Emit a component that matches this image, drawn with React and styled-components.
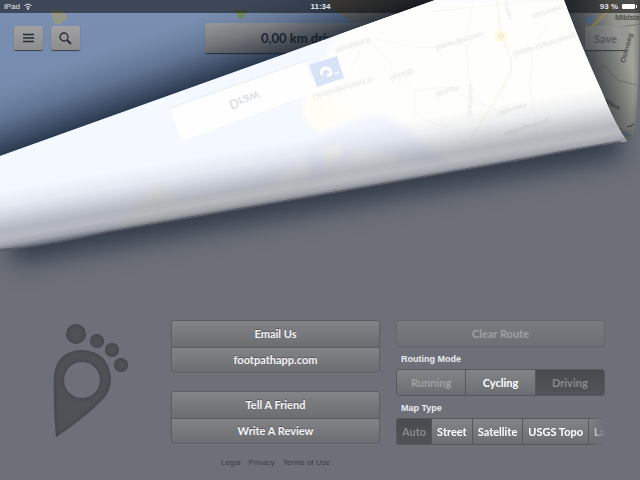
import React from 'react';
import styled, { createGlobalStyle } from 'styled-components';

const GlobalStyle = createGlobalStyle`
  * {
    box-sizing: border-box;
  }

  body {
    margin: 0;
    background: #6d7079;
    font-family: Lato, 'Liberation Sans', sans-serif;
  }

  button {
    font-family: inherit;
    cursor: pointer;
  }
`;

const Page = styled.div`
  position: relative;
  display: flex;
  flex-direction: column;
  min-height: 100vh;
  overflow: hidden;
`;

const Scene = styled.svg`
  position: absolute;
  z-index: ${p => p.$level || 0};
  top: 0;
  left: 0;
  display: block;
  width: 100%;
  pointer-events: none;
`;

const StatusBar = styled.header`
  position: relative;
  z-index: 2;
  display: grid;
  grid-template-columns: 1fr auto 1fr;
  align-items: center;
  height: 13px;
  padding: 0 3px 0 4px;
  background: rgba(0, 0, 0, 0.5);
  color: #e8eaee;
  font: 8px/13px 'Liberation Sans', sans-serif;
`;

const StatusItem = styled.span`
  display: flex;
  align-items: center;
  justify-content: ${p => (p.$end ? 'flex-end' : 'flex-start')};
  gap: 4px;
  font-weight: ${p => (p.$bold ? 700 : 400)};
`;

const Toolbar = styled.nav`
  position: relative;
  display: grid;
  grid-template-columns: 1fr 230px 1fr;
  align-items: center;
  padding: 10px 14px 0;
`;

const ToolGroup = styled.div`
  display: flex;
  gap: 8px;
  justify-content: ${p => (p.$end ? 'flex-end' : 'flex-start')};
`;

const ToolButton = styled.button`
  display: flex;
  align-items: center;
  justify-content: center;
  width: ${p => (p.$wide ? 41 : 29)}px;
  height: 24px;
  padding: 0;
  border: 0;
  border-radius: 2px;
  background: ${p => (p.disabled ? 'rgba(150, 150, 150, 0.8)' : 'linear-gradient(#a1a1a1, #8d8d8d)')};
  box-shadow: 0 1px 1px #3b4047;
  color: ${p => (p.disabled ? '#666' : '#262d36')};
  font-size: 11px;
  font-weight: 700;
`;

const Distance = styled.output`
  height: 30px;
  padding-left: 56px;
  border-radius: 2px;
  background: linear-gradient(#9c9c9c, #888);
  box-shadow: 0 1px 1px #30353d;
  color: #262d36;
  font-size: 13px;
  font-weight: 700;
  line-height: 30px;
`;

const Settings = styled.main`
  position: relative;
  z-index: 4;
  display: grid;
  grid-template-columns: 102px 1fr 1fr;
  gap: 16px;
  margin-top: auto;
  padding: 240px 35px 11px 53px;
`;

const Column = styled.section`
  display: flex;
  flex-direction: column;
  min-width: 0;
`;

const ButtonStack = styled.div`
  display: flex;
  flex-direction: column;
  margin-bottom: 18px;
  border: 1px solid #5b5d63;
  border-radius: 3px;
  box-shadow: 0 1px 0 #787b83;
  overflow: hidden;
`;

const PanelButton = styled.button`
  height: 26px;
  padding: 0 0 1px;
  border: 0;
  background: linear-gradient(#838488, #6c6d70);
  color: #f4f4f5;
  font-size: 11px;
  font-weight: 700;
  text-shadow: 0 -1px 0 #55565a;

  & + & {
    border-top: 1px solid #58595d;
  }

  &:last-child {
    height: 25px;
  }
`;

const ClearButton = styled(PanelButton)`
  && {
    height: 27px;
    border: 1px solid #64666c;
    border-radius: 3px;
    background: linear-gradient(#7a7b80, #6d6f74);
    color: #a0a1a5;
    text-shadow: none;
  }
`;

const Label = styled.h2`
  margin: 0;
  padding: 7px 0 4px 5px;
  color: #ebecee;
  font: 700 9px/11px 'Liberation Sans', sans-serif;
`;

const Segments = styled.div`
  display: flex;
  height: 27px;
  border: 1px solid #55575c;
  border-right-width: ${p => (p.$scrolls ? 0 : 1)}px;
  border-radius: 3px;
  overflow: hidden;
  ${p => p.$scrolls && 'mask-image: linear-gradient(90deg, #000 92%, transparent);'}
`;

const Segment = styled.button`
  flex: ${p => (p.$fit ? '0 0 auto' : '1 1 0')};
  padding: 0 ${p => (p.$fit ? 5 : 0)}px 1px;
  border: 0;
  background: ${p => (p['aria-pressed'] ? 'linear-gradient(#4a4b4e, #525356)' : 'linear-gradient(#838488, #6c6d70)')};
  color: ${p => (p['aria-pressed'] ? '#898a8e' : p.disabled ? '#a0a1a5' : '#fff')};
  font-size: 11px;
  font-weight: 700;
  white-space: nowrap;

  & + & {
    border-left: 1px solid #55575c;
  }
`;

const Legal = styled.footer`
  display: flex;
  justify-content: center;
  gap: 8px;
  margin-top: -5px;
  font: 8px/12px 'Liberation Sans', sans-serif;

  a {
    color: #3c3f47;
    text-decoration: none;
  }
`;

const Footprint = styled.svg`
  width: 78px;
  height: 120px;
`;

// labels seen through the back of the page, so they are upside down
const ghostLabels = [
  ['Norddeich', 335, 48, 8],
  ['Neuenkirchen', 435, 46, 8],
  ['Süder-Marienkoog', 512, 52, 8],
  ['Wöhrden', 531, 14, 8],
  ['Schülp', 389, 76, 8],
  ['Oesterdeichstrich', 312, 95, 8],
  ['Büsum', 435, 92, 8],
  ['Hillgroven', 496, 112, 7],
  ['Hedwigenkoog', 504, 132, 7],
];

const roads = [
  'M366 37 L391 64 L393 77 L416 90 L414 115 L450 130',
  'M366 37 L346 82 L320 108',
  'M366 37 L420 48 L475 43',
  'M474 0 L466 40 L470 95 L466 120',
  'M550 20 L533 48 L530 85 L538 140',
  'M416 90 L448 87 L475 101 L505 113',
  'M440 120 L476 155',
  'M430 12 L500 4 L562 0',
];

const BackMap = () => (
  <Scene viewBox="0 0 640 480" aria-hidden="true">
    <defs>
      <linearGradient id="water" x1="0" y1="0" x2="0" y2="1">
        <stop offset="0" stopColor="#7a8fb1" />
        <stop offset="1" stopColor="#7288aa" />
      </linearGradient>
      <linearGradient id="flap" x1="570" y1="0" x2="640" y2="0" gradientUnits="userSpaceOnUse">
        <stop offset="0" stopColor="#62676b" />
        <stop offset="0.6" stopColor="#8e908b" />
        <stop offset="0.9" stopColor="#a1a299" />
        <stop offset="1" stopColor="#7f8078" />
      </linearGradient>
      <clipPath id="flapClip">
        <path d="M560 0 H640 L639 50 Q638 112 634 130 Q631 141 625 141 Q605 112 560 0Z" />
      </clipPath>
    </defs>
    <path d="M0 0 H440 L0 158Z" fill="url(#water)" />
    <path d="M50 10 L62 10 L68 17 L60 25 L54 23Z" fill="#949887" />
    <path d="M233 10 H249 L241 20Z" fill="#748f61" />
    <path d="M325 0 L334 10 L355 23 L390 20 L440 0Z" fill="#8b857b" />
    <g clipPath="url(#flapClip)">
      <rect x="560" width="80" height="145" fill="url(#flap)" />
      <path d="M584 20 l10 -6 -2 8 4 3 -9 -2z" fill="#607ca5" />
      <path d="M588 30 L607 12 L614 0" fill="none" stroke="#a89659" strokeWidth="2" />
      <path d="M566 15 L600 30 L640 24 M600 28 L590 78 M584 70 L605 66 L618 80 L640 86 M570 26 L584 4" fill="none" stroke="#727a77" />
      <path d="M616 134 L640 136" stroke="#8095ab" strokeWidth="2" />
      <g fill="#33342f" fontFamily="Liberation Sans, sans-serif">
        <text x="615" y="20" fontSize="8">Mildste</text>
        <text transform="translate(625 63) rotate(-75)" fontSize="7">Osterweg</text>
        <text transform="translate(601 100) rotate(30)" fontSize="6">addieck</text>
      </g>
      <path d="M617 131 l5 -2 M627 127 l4 -1 3 -2" fill="none" stroke="#44453f" />
    </g>
  </Scene>
);

const PageShade = () => (
  <Scene $level={1} viewBox="0 0 640 480" aria-hidden="true">
    <defs>
      <linearGradient id="edgeShade" x1="217" y1="78" x2="195" y2="17" gradientUnits="userSpaceOnUse">
        <stop offset="0" stopColor="#0a1424" stopOpacity="0.68" />
        <stop offset="0.2" stopColor="#0a1424" stopOpacity="0.48" />
        <stop offset="0.5" stopColor="#0a1424" stopOpacity="0.2" />
        <stop offset="0.8" stopColor="#0a1424" stopOpacity="0.05" />
        <stop offset="1" stopColor="#0a1424" stopOpacity="0" />
      </linearGradient>
      <filter id="blur" x="-20%" y="-50%" width="140%" height="200%" colorInterpolationFilters="sRGB">
        <feGaussianBlur stdDeviation="13" />
      </filter>
      <clipPath id="below">
        <path d="M0 240 L630 130 L640 80 V480 H0Z" />
      </clipPath>
    </defs>
    <path d="M0 156 L435 0 H180 L0 65Z" fill="url(#edgeShade)" />
    <g clipPath="url(#below)">
      <path d="M10 244 L320 190 L620 138" fill="none" stroke="#303a48" strokeWidth="40" filter="url(#blur)" />
    </g>
  </Scene>
);

const PageCurl = () => (
  <Scene $level={3} viewBox="0 0 640 480" aria-hidden="true">
    <defs>
      <linearGradient id="flapShade" x1="592" y1="70" x2="627" y2="57" gradientUnits="userSpaceOnUse">
        <stop offset="0" stopColor="#15191f" stopOpacity="0.5" />
        <stop offset="1" stopColor="#15191f" stopOpacity="0" />
      </linearGradient>
      <linearGradient id="roll" x1="320" y1="195" x2="310" y2="137" gradientUnits="userSpaceOnUse">
        <stop offset="0" stopColor="#5a5e69" stopOpacity="0.85" />
        <stop offset="0.08" stopColor="#70737f" stopOpacity="0.62" />
        <stop offset="0.18" stopColor="#7c7e89" stopOpacity="0.52" />
        <stop offset="0.32" stopColor="#6f7382" stopOpacity="0.5" />
        <stop offset="0.48" stopColor="#737886" stopOpacity="0.36" />
        <stop offset="0.72" stopColor="#8288a0" stopOpacity="0.14" />
        <stop offset="1" stopColor="#8a90a0" stopOpacity="0" />
      </linearGradient>
      <filter id="haze" colorInterpolationFilters="sRGB">
        <feGaussianBlur stdDeviation="3" />
      </filter>
      <clipPath id="page">
        <path d="M0 156 L435 0 H564 Q578 39 602 92 Q616 127 627 141 Q580 148 530 158 L320 195 L107 232 Q40 247 0 250Z" />
      </clipPath>
    </defs>
    <path d="M564 0 H640 L639 50 Q638 112 634 130 Q631 141 625 141 Q605 112 564 0Z" fill="url(#flapShade)" />
    <g clipPath="url(#page)">
      <rect width="640" height="260" fill="#f4f8ff" />
      <path d="M250 0 H640 V200 H250 L290 170 L322 150 L350 130 L318 128 L303 108 L306 90 L340 30Z" fill="#fefefc" filter="url(#haze)" />
      <g filter="url(#haze)">
        <path d="M302 108 Q305 128 322 131 L360 112 L312 92Z" fill="#fffef6" />
        <path d="M305 150 L345 125 L370 116 L392 118 L415 136 L450 164 L405 160 L360 149 L345 162 L310 185Z" fill="#f0f4fd" />
        <path d="M322 148 L344 146 L340 158 L326 170Z" fill="#fbfaf4" />
        <path d="M120 225 L158 185 L175 202 L260 190 L300 183 L320 192 L110 235Z" fill="#f9f8f1" />
      </g>
      <g fill="none" stroke="#f8f8f6">
        {roads.map(d => (
          <path key={d} d={d} />
        ))}
        <path d="M497 0 L501 36 L511 58 L511 72 L497 97 L470 140" stroke="#faf7ee" strokeWidth="2" />
      </g>
      <circle cx="501" cy="36" r="6" fill="#fef9e3" />
      <circle cx="501" cy="36" r="2" fill="none" stroke="#e8e0bf" />
      <path d="M170 108 L305 61 L317 92 L182 141Z" fill="#fefefe" />
      <path d="M170 108 L305 61" stroke="#e8ebf0" />
      <path d="M309 65 L337 56 L344 78 L317 87Z" fill="#d8e3f8" />
      <path d="M322 75 Q320 70 325 68 Q331 68 331 73 Q330 76 327 75" fill="none" stroke="#fff" strokeWidth="3" />
      <path d="M334 74 l5 -2" stroke="#f1f5fd" strokeWidth="2" />
      <text transform="translate(228 101) rotate(-19) scale(1 -1)" fontFamily="Lato, sans-serif" fontSize="13" fontWeight="700" fill="#dfe1e5">
        Draw
      </text>
      <g fill="#e8e8e5" fontFamily="Liberation Sans, sans-serif">
        {ghostLabels.map(([name, x, y, size]) => (
          <text key={name} transform={`translate(${x} ${y}) rotate(-17) scale(1 -1)`} fontSize={size}>
            {name}
          </text>
        ))}
        <text transform="translate(468 116) rotate(-88) scale(1 -1)" fontSize="6">Deichstraße</text>
        <text transform="translate(504 3) rotate(75)" fontSize="6">Damm</text>
      </g>
      <path d="M0 150 L640 40 V260 H0Z" fill="url(#roll)" />
    </g>
    {/* darkens the antialiased rim of the roll */}
    <path d="M0 250 Q40 247 107 232 L320 195 L530 158 Q580 148 620 142" fill="none" stroke="#50555f" strokeWidth="2" strokeOpacity="0.8" />
  </Scene>
);

const Logo = () => (
  <Footprint viewBox="53 320 78 120" role="img" aria-label="Footpath">
    <defs>
      <filter id="inset" x="-10%" y="-10%" width="120%" height="120%" colorInterpolationFilters="sRGB">
        <feGaussianBlur in="SourceAlpha" stdDeviation="2" result="soft" />
        <feComposite in="SourceAlpha" in2="soft" operator="out" result="rim" />
        <feFlood floodColor="#303136" floodOpacity="0.6" />
        <feComposite in2="rim" operator="in" result="shade" />
        <feMerge>
          <feMergeNode in="SourceGraphic" />
          <feMergeNode in="shade" />
        </feMerge>
      </filter>
    </defs>
    <g fill="#505156" filter="url(#inset)">
      <circle cx="76" cy="334" r="10" />
      <circle cx="97" cy="341" r="7" />
      <circle cx="112" cy="350" r="7" />
      <circle cx="121" cy="365" r="7" />
      <path
        fillRule="evenodd"
        d="M56 437 Q53 405 54 375 Q57 351 82 350 Q108 351 111 378 Q111 391 103 399 Q85 418 56 437Z M82 362 a18 18 0 1 0 0 36 a18 18 0 1 0 0 -36Z"
      />
    </g>
  </Footprint>
);

export default () => (
  <Page>
    <GlobalStyle />
    <BackMap />
    <StatusBar>
      <StatusItem>
        iPad
        <svg width="8" height="7" viewBox="0 0 8 7" fill="none" stroke="#e8eaee" aria-hidden="true">
          <path d="M0.5 2.5 Q4 -0.5 7.5 2.5 M2 4.3 Q4 2.7 6 4.3" />
          <circle cx="4" cy="5.8" r="0.6" fill="#e8eaee" />
        </svg>
      </StatusItem>
      <StatusItem $bold>11:34</StatusItem>
      <StatusItem $end $bold>
        93 %
        <svg width="15" height="7" viewBox="0 0 15 7" fill="#fff" aria-hidden="true">
          <rect y="1" width="13" height="5" rx="1" />
          <rect x="14" y="2" width="1" height="3" />
        </svg>
      </StatusItem>
    </StatusBar>
    <Toolbar>
      <ToolGroup>
        <ToolButton aria-label="Menu">
          <svg width="11" height="10" viewBox="0 0 11 10" stroke="currentColor" strokeWidth="1.4">
            <path d="M0 1.5 H11 M0 5 H11 M0 8.5 H11" />
          </svg>
        </ToolButton>
        <ToolButton aria-label="Search">
          <svg width="13" height="13" viewBox="0 0 13 13" fill="none" stroke="currentColor">
            <circle cx="5" cy="5" r="4" strokeWidth="1.3" />
            <path d="M8 8 L12 12" strokeWidth="2" />
          </svg>
        </ToolButton>
      </ToolGroup>
      <Distance>0,00 km driven</Distance>
      <ToolGroup $end>
        <ToolButton $wide disabled>Save</ToolButton>
      </ToolGroup>
    </Toolbar>
    <PageShade />
    <PageCurl />
    <Settings>
      <Logo />
      <Column>
        <ButtonStack>
          <PanelButton>Email Us</PanelButton>
          <PanelButton>footpathapp.com</PanelButton>
        </ButtonStack>
        <ButtonStack>
          <PanelButton>Tell A Friend</PanelButton>
          <PanelButton>Write A Review</PanelButton>
        </ButtonStack>
        <Legal>
          <a href="#legal">Legal</a>
          <a href="#privacy">Privacy</a>
          <a href="#terms">Terms of Use</a>
        </Legal>
      </Column>
      <Column>
        <ClearButton disabled>Clear Route</ClearButton>
        <Label id="routing">Routing Mode</Label>
        <Segments role="group" aria-labelledby="routing">
          <Segment disabled>Running</Segment>
          <Segment>Cycling</Segment>
          <Segment aria-pressed>Driving</Segment>
        </Segments>
        <Label id="map-type">Map Type</Label>
        <Segments $scrolls role="group" aria-labelledby="map-type">
          <Segment $fit aria-pressed>Auto</Segment>
          <Segment $fit>Street</Segment>
          <Segment $fit>Satellite</Segment>
          <Segment $fit>USGS Topo</Segment>
          <Segment $fit>La</Segment>
        </Segments>
      </Column>
    </Settings>
  </Page>
);
